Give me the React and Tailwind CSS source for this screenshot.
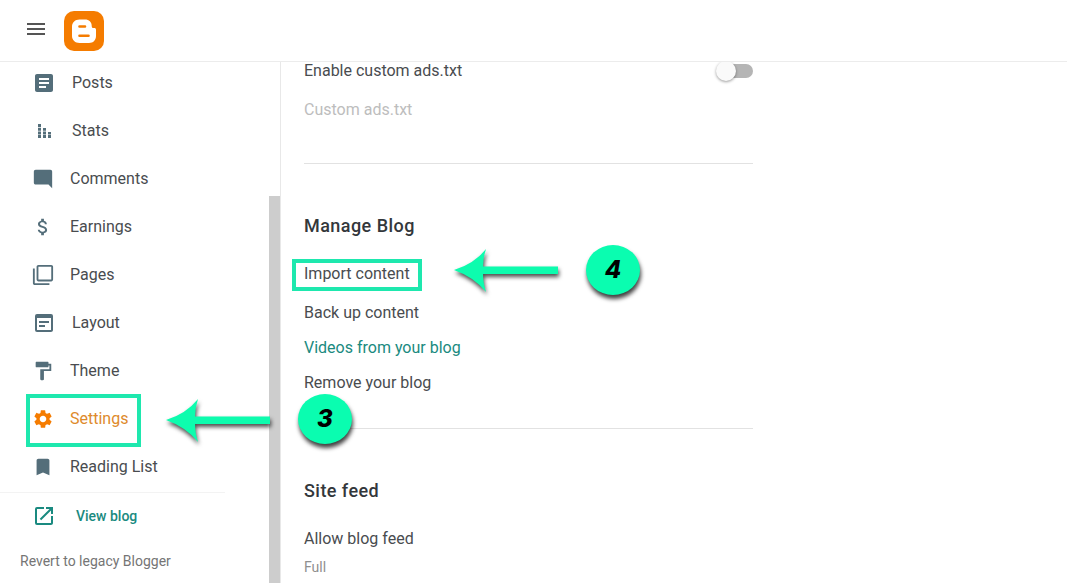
import { useState } from 'react'
import {
  MdArticle,
  MdAttachMoney,
  MdBookmark,
  MdFilterNone,
  MdFormatPaint,
  MdMenu,
  MdModeComment,
  MdOpenInNew,
  MdSettings,
  MdWysiwyg,
} from 'react-icons/md'

function StatsIcon({ className }) {
  return (
    <svg viewBox="0 0 24 24" fill="currentColor" className={className}>
      <path d="M6 5h3v3H6zM6 8.700h3v3H6zM6 12.400h3v3H6zM6 16h3v3H6zM11 9h3v2.700h-3zM11 12.400h3v3h-3zM11 16h3v3h-3zM16 13h3v2.400h-3zM16 16h3v3h-3z" />
    </svg>
  )
}

function BloggerLogo() {
  return (
    <svg viewBox="0 0 40 40" className="size-10" role="img" aria-label="Blogger">
      <rect width="40" height="40" rx="10" fill="#f57c00" />
      <path
        fill="#fff"
        d="M15.500 8.500H21c4 0 6.700 2.700 6.700 6.200 0 1.600.5 2.300 1.800 2.300h.8c1 0 1.700.6 1.700 1.700V25c0 4.200-2.800 7-7 7h-9.500C11.300 32 8 29.200 8 25v-9.500c0-4.200 3.300-7 7.500-7z"
      />
      <path d="M15.500 15.500h5.500M15.500 24.800h9" stroke="#f57c00" strokeWidth="2.600" strokeLinecap="round" />
    </svg>
  )
}

// Left pointing arrow used by the step markers
function Arrow({ className }) {
  return (
    <svg viewBox="0 0 104 44" className={`h-11 w-26 overflow-visible drop-shadow-[1px_3px_2px_rgba(0,0,0,0.7)] ${className}`} aria-hidden="true">
      <path d="M0 21Q20 15 32 0Q29 9 29 17.500H104V25H29Q29 33 32 43Q20 28 0 21z" fill="#0dfcae" />
    </svg>
  )
}

function StepBadge({ number, className }) {
  return (
    <span
      className={`flex h-[50px] w-[54px] items-center justify-center rounded-[50%] bg-[#0afdb0] font-[Inter,sans-serif] text-2xl leading-none font-extrabold text-black italic shadow-[1px_4px_4px_rgba(0,0,0,0.75)] ${className}`}
    >
      {number}
    </span>
  )
}

const navItems = [
  { label: 'Posts', icon: MdArticle, wide: true },
  { label: 'Stats', icon: StatsIcon, wide: true },
  { label: 'Comments', icon: MdModeComment },
  { label: 'Earnings', icon: MdAttachMoney },
  { label: 'Pages', icon: MdFilterNone },
  { label: 'Layout', icon: MdWysiwyg, wide: true },
  { label: 'Theme', icon: MdFormatPaint },
  { label: 'Settings', icon: MdSettings, active: true },
  { label: 'Reading List', icon: MdBookmark },
]

function NavItem({ item }) {
  const Icon = item.icon
  return (
    <li className="relative">
      <a
        href="#"
        className={`flex h-12 items-center gap-4 pl-8 text-base ${item.active ? 'text-[#de8a2b]' : 'text-[#494c4f]'}`}
      >
        <Icon
          className={`shrink-0 ${item.wide ? 'size-6' : 'size-[22px]'} ${item.active ? 'text-[#f57c00]' : 'text-[#546e7a]'}`}
        />
        {item.label}
      </a>
      {item.active && (
        <>
          <span className="pointer-events-none absolute -top-px left-[26px] h-[53px] w-[115px] border-4 border-[#1ee8ae]" />
          <Arrow className="absolute top-1 left-[166px]" />
        </>
      )}
    </li>
  )
}

function Sidebar() {
  return (
    <aside className="flex w-[281px] shrink-0 border-r border-[#e8e8e8]">
      <div className="min-w-0 flex-1">
        <nav className="-mt-[3px]">
          <ul>
            {navItems.map((item) => (
              <NavItem key={item.label} item={item} />
            ))}
          </ul>
        </nav>
        <div className="mt-px mr-11 border-t border-[#f3f3f3]" />
        <a href="#" className="flex h-[46px] items-center gap-5 pl-8 text-sm font-medium text-[#1a8a80]">
          <MdOpenInNew className="size-6" />
          View blog
        </a>
        <a href="#" className="mt-3 ml-5 block text-sm text-[#757575]">
          Revert to legacy Blogger
        </a>
      </div>
      {/* Scrollbar thumb */}
      <div className="mt-[134px] w-[11px] bg-[#cdcdcd]" />
    </aside>
  )
}

function Settings() {
  const [adsEnabled, setAdsEnabled] = useState(false)

  return (
    <main className="min-w-0 flex-1 pr-6 pl-[23px] text-base text-[#494c4f]">
      <div className="max-w-[449px]">
        {/* Monetization */}
        <section className="border-b border-[#e2e2e2] pb-[41px]">
          <div className="flex h-[18px] items-center justify-between">
            <label htmlFor="ads">Enable custom ads.txt</label>
            <span className="relative flex h-[22px] w-[37px] items-center justify-end">
              <input
                id="ads"
                type="checkbox"
                role="switch"
                checked={adsEnabled}
                onChange={(e) => setAdsEnabled(e.target.checked)}
                className="peer h-3.5 w-8 appearance-none rounded-full bg-[#b5b5b5] checked:bg-[#f5b173]"
              />
              <span className="pointer-events-none absolute left-0 size-5 rounded-full bg-[#fafafa] shadow-[0_1px_3px_rgba(0,0,0,0.4)] peer-checked:left-[17px] peer-checked:bg-[#f57c00]" />
            </span>
          </div>
          <p className="mt-[18px] text-[#bdbdbd]">Custom ads.txt</p>
        </section>

        {/* Manage Blog */}
        <section className="relative border-b border-[#e2e2e2] pt-12 pb-[33px]">
          <h2 className="text-lg font-medium tracking-wide text-[#33373b]">Manage Blog</h2>
          <div className="relative mt-[19px] mb-3 flex h-[30px] items-center">
            <button type="button">Import content</button>
            <span className="pointer-events-none absolute top-0 -left-3 h-8 w-[130px] border-4 border-[#1ee8ae]" />
            <Arrow className="absolute -top-2.5 left-[150px]" />
            <StepBadge number={4} className="absolute -top-3.5 left-[282px]" />
          </div>
          <div className="flex flex-col items-start gap-[11px]">
            <button type="button">Back up content</button>
            <a href="#" className="text-[#1a8a80]">Videos from your blog</a>
            <button type="button">Remove your blog</button>
          </div>
          <StepBadge number={3} className="absolute -bottom-4 -left-1.5" />
        </section>

        {/* Site feed */}
        <section className="pt-12">
          <h2 className="text-lg font-medium tracking-wide text-[#33373b]">Site feed</h2>
          <button type="button" className="mt-[22px] block text-left">
            <span className="block">Allow blog feed</span>
            <span className="mt-1.5 block text-sm text-[#8f8f8f]">Full</span>
          </button>
        </section>
      </div>
    </main>
  )
}

function App() {
  return (
    <div className="flex h-screen flex-col overflow-hidden bg-white font-[Roboto,sans-serif]">
      <header className="flex h-[62px] shrink-0 items-center gap-4 border-b border-[#ececec] pl-6">
        <button type="button" aria-label="Main menu" className="pb-1 text-[#555555]">
          <MdMenu className="size-6" />
        </button>
        <BloggerLogo />
      </header>
      <div className="flex min-h-0 flex-1 overflow-hidden">
        <Sidebar />
        <Settings />
      </div>
    </div>
  )
}

export default App
